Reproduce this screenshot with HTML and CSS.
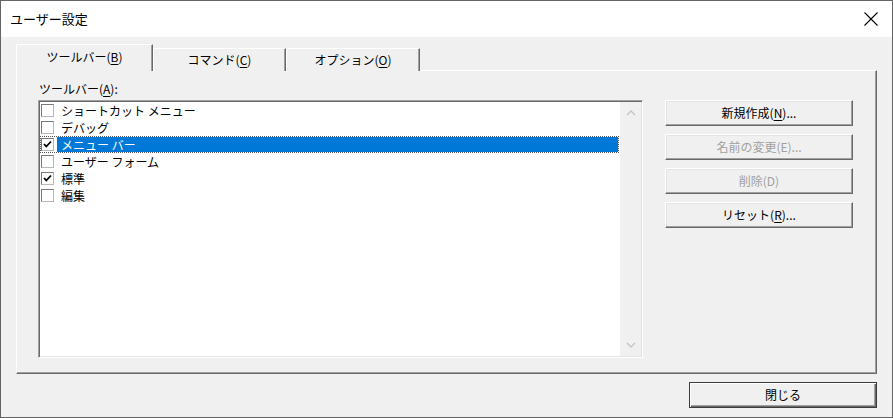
FILE: index.html
```html
<!DOCTYPE html>
<html lang="ja">
<head>
<meta charset="utf-8">
<title>ユーザー設定</title>
<link rel="stylesheet" href="styles.css">
</head>
<body>
<div class="window">
  <div class="titlebar">
    <span class="title">ユーザー設定</span>
    <svg class="close" width="16" height="16" viewBox="0 0 16 16"><path d="M1.5 1.5 L14.5 14.5 M14.5 1.5 L1.5 14.5" stroke="#000" stroke-width="1.1" fill="none"/></svg>
  </div>
  <div class="client">
    <div class="tabs">
      <div class="tab tab-1 active">ツールバー(<u>B</u>)</div>
      <div class="tab tab-2">コマンド(<u>C</u>)</div>
      <div class="tab tab-3">オプション(<u>O</u>)</div>
    </div>
    <div class="pane">
      <div class="label">ツールバー(<u>A</u>):</div>
      <div class="content">
        <div class="listbox">
          <ul class="items">
            <li class="item"><span class="check"></span><span class="text">ショートカット メニュー</span></li>
            <li class="item"><span class="check"></span><span class="text">デバッグ</span></li>
            <li class="item selected"><span class="check checked"><svg width="11" height="11" viewBox="0 0 11 11"><path d="M2 5 L4.3 7.5 L9 2.5" stroke="#000" stroke-width="1.8" fill="none"/></svg></span><span class="text">メニュー バー</span></li>
            <li class="item"><span class="check"></span><span class="text">ユーザー フォーム</span></li>
            <li class="item"><span class="check checked"><svg width="11" height="11" viewBox="0 0 11 11"><path d="M2 5 L4.3 7.5 L9 2.5" stroke="#000" stroke-width="1.8" fill="none"/></svg></span><span class="text">標準</span></li>
            <li class="item"><span class="check"></span><span class="text">編集</span></li>
          </ul>
          <div class="scrollbar">
            <svg class="arrow" width="10" height="6" viewBox="0 0 10 6"><path d="M1 5 L5 1 L9 5" stroke="#c4c4c4" stroke-width="1.4" fill="none"/></svg>
            <svg class="arrow" width="10" height="6" viewBox="0 0 10 6"><path d="M1 1 L5 5 L9 1" stroke="#c4c4c4" stroke-width="1.4" fill="none"/></svg>
          </div>
        </div>
        <div class="buttons">
          <button class="btn">新規作成(<u>N</u>)...</button>
          <button class="btn disabled">名前の変更(E)...</button>
          <button class="btn disabled">削除(D)</button>
          <button class="btn">リセット(<u>R</u>)...</button>
        </div>
      </div>
    </div>
    <div class="footer">
      <button class="btn default">閉じる</button>
    </div>
  </div>
</div>
</body>
</html>
```
FILE: styles.css
```css
* { box-sizing: border-box; }
html, body { margin: 0; padding: 0; }
body {
  font-family: "Noto Sans CJK JP", "Noto Sans", sans-serif;
  font-size: 12px;
  color: #000;
  background: #f0f0f0;
}
u { text-decoration: underline; text-underline-offset: 2px; }

.window {
  width: 893px;
  height: 418px;
  border: 1px solid #646464;
  display: flex;
  flex-direction: column;
  background: #f0f0f0;
}

.titlebar {
  height: 36px;
  background: #fff;
  display: flex;
  align-items: center;
  justify-content: space-between;
  padding: 0 13px 0 9px;
  flex: none;
}
.title { font-size: 13px; line-height: 16px; }
.close { display: block; }

.client {
  flex: 1;
  padding: 7px 15px 0 15px;
  display: flex;
  flex-direction: column;
}

.tabs {
  display: flex;
  align-items: flex-end;
  height: 27px;
  position: relative;
  z-index: 1;
  margin-bottom: -1px;
}
.tab {
  height: 23px;
  background: #f0f0f0;
  border-top: 1px solid #fff;
  border-left: 1px solid #fff;
  border-right: 1px solid #696969;
  box-shadow: inset -1px 0 0 #a0a0a0;
  display: flex;
  align-items: center;
  justify-content: center;
  line-height: 16px;
  padding-bottom: 1px;
}
.tab-1 { width: 137px; }
.tab-2 { width: 133px; }
.tab-3 { width: 134px; }
.tab.active {
  height: 27px;
  padding-bottom: 3px;
}

.pane {
  border-top: 1px solid #fff;
  border-left: 1px solid #fff;
  border-right: 1px solid #696969;
  border-bottom: 1px solid #696969;
  box-shadow: inset -1px -1px 0 #a0a0a0;
  padding: 10px 22px 15px 21px;
}
.label {
  height: 19px;
  line-height: 16px;
  padding-left: 1px;
}
.content {
  display: flex;
  gap: 22px;
}

.listbox {
  width: 605px;
  height: 258px;
  border-top: 1px solid #a0a0a0;
  border-left: 1px solid #a0a0a0;
  border-right: 1px solid #fff;
  border-bottom: 1px solid #fff;
  box-shadow: inset 1px 1px 0 #696969, inset -1px -1px 0 #e3e3e3;
  background: #fff;
  padding: 1px;
  display: flex;
}
.items {
  list-style: none;
  margin: 0;
  padding: 0;
  flex: 1;
}
.item {
  height: 17px;
  display: flex;
  align-items: center;
}
.check {
  width: 13px;
  height: 13px;
  margin-left: 1px;
  border: 1px solid #7a7a7a;
  border-right-color: #b8b8b8;
  border-bottom-color: #b8b8b8;
  background: #fff;
  display: flex;
  align-items: center;
  justify-content: center;
  flex: none;
}
.text {
  line-height: 17px;
  padding-left: 4px;
  margin-left: 3px;
  flex: 1;
  height: 17px;
  white-space: nowrap;
}
.item.selected {
  outline: 1px dotted #555;
  outline-offset: -1px;
}
.selected .text {
  background: #0078d7;
  color: #fff;
  margin-left: 3px;
  margin-right: 1px;
  height: 15px;
  line-height: 15px;
  padding-left: 4px;
}

.scrollbar {
  width: 21px;
  background: #f0f0f0;
  display: flex;
  flex-direction: column;
  justify-content: space-between;
  align-items: center;
  padding: 8px 0 8px;
  margin-left: 1px;
}
.arrow { display: block; }

.buttons {
  width: 188px;
  display: flex;
  flex-direction: column;
  gap: 8px;
}
.btn {
  font-family: inherit;
  font-size: 12px;
  height: 26px;
  width: 188px;
  background: #f0f0f0;
  color: #000;
  border-top: 1px solid #fff;
  border-left: 1px solid #fff;
  border-right: 1px solid #696969;
  border-bottom: 1px solid #696969;
  box-shadow: inset -1px -1px 0 #a0a0a0, inset 1px 1px 0 #e3e3e3;
  padding: 0;
  line-height: 16px;
  margin: 0;
}
.btn.disabled { color: #a0a0a0; }

.footer {
  display: flex;
  justify-content: flex-end;
  padding-top: 8px;
}
.btn.default {
  border: 1px solid #3c3c3c;
  box-shadow: inset 1px 1px 0 #fff, inset -1px -1px 0 #696969, inset -2px -2px 0 #a0a0a0;
}
```
